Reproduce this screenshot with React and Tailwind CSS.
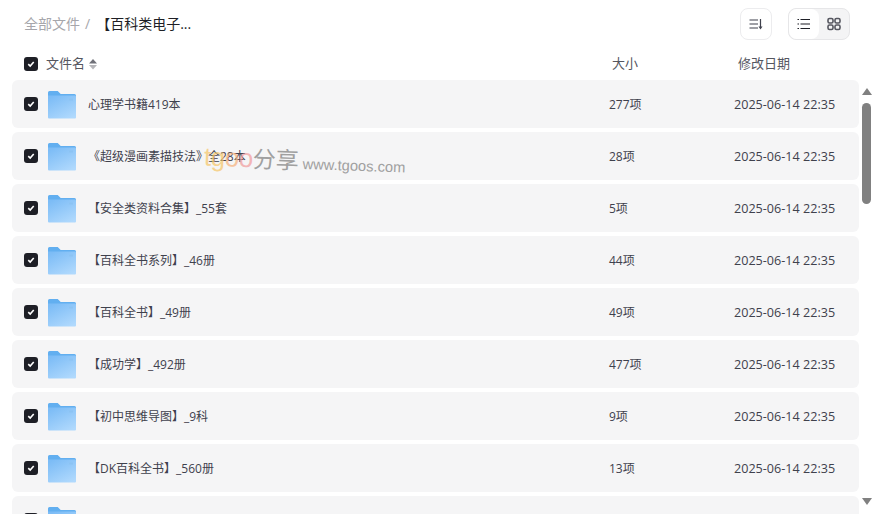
const rows = [
  ["心理学书籍419本", "277项"],
  ["《超级漫画素描技法》全28本", "28项"],
  ["【安全类资料合集】_55套", "5项"],
  ["【百科全书系列】_46册", "44项"],
  ["【百科全书】_49册", "49项"],
  ["【成功学】_492册", "477项"],
  ["【初中思维导图】_9科", "9项"],
  ["【DK百科全书】_560册", "13项"],
  ["", ""],
];

function Check() {
  return (
    <span className="flex h-[14px] w-[14px] shrink-0 items-center justify-center rounded-[3px] bg-[#1e1f26]">
      <svg width="8" height="8" viewBox="0 0 10 10" fill="none">
        <path d="M1.6 5.2 4 7.6 8.4 2.6" stroke="#fff" strokeWidth="2" />
      </svg>
    </span>
  );
}

function Folder() {
  return (
    <svg width="30" height="30" viewBox="0 0 30 30" className="shrink-0">
      <defs>
        <linearGradient id="fg" x1="0.2" y1="0" x2="0.8" y2="1">
          <stop offset="0" stopColor="#7cbcf6" />
          <stop offset="1" stopColor="#b0d9fd" />
        </linearGradient>
      </defs>
      <path d="M1 3.5A1.5 1.5 0 0 1 2.5 2h8.2l3 3H27.5A1.5 1.5 0 0 1 29 6.5V10H1Z" fill="#62aff0" />
      <path d="M1 6.5h27A1 1 0 0 1 29 7.500V28.500A1 1 0 0 1 28 29.500H2A1 1 0 0 1 1 28.500Z" fill="url(#fg)" />
      <rect x="22" y="9.500" width="4" height="2" fill="#8cc3f3" />
    </svg>
  );
}

function Row({ name, count }) {
  return (
    <div className="flex h-12 shrink-0 items-center rounded-md bg-[#f5f5f6] pl-3 text-xs text-[#3f414d]">
      <Check />
      <span className="ml-[9px]"><Folder /></span>
      <span className="ml-[11px] w-[521px] shrink-0 translate-y-[1px] truncate">{name}</span>
      <span className="w-[125px] shrink-0 translate-y-[1px]">{count}</span>
      {name && <span className="translate-y-[1px] whitespace-nowrap text-[12.6px]">2025-06-14 22:35</span>}
    </div>
  );
}

export default function App() {
  return (
    <div className="relative flex h-[514px] w-[874px] flex-col overflow-hidden bg-white font-['Open_Sans','Noto_Sans_CJK_SC',sans-serif] text-[#3f414d]">
      <header className="flex h-[48px] shrink-0 items-center pl-6 pr-6">
        <span className="text-sm text-[#a6a6ab]">全部文件</span>
        <span className="ml-[5px] text-sm text-[#a6a6ab]">/</span>
        <span className="ml-[6px] text-sm text-[#1e1f26]">【百科类电子...</span>
        <div className="ml-auto flex items-center gap-4">
          <button className="flex h-8 w-8 items-center justify-center rounded-lg border border-[#ececee] bg-white">
            <svg width="14" height="14" viewBox="0 0 14 14" fill="none" stroke="#3f414d" strokeWidth="1.200">
              <path d="M0.500 3H9M0.500 7H9M0.500 11H9M11.500 2V10" />
              <path d="M9.500 9.500h4L11.500 12.500Z" fill="#3f414d" stroke="none" />
            </svg>
          </button>
          <div className="flex h-8 w-[62px] rounded-lg border border-[#e6e6e8] bg-[#f4f4f5]">
            <span className="flex w-[30px] items-center justify-center rounded-lg bg-white">
              <svg width="14" height="14" viewBox="0 0 14 14" fill="none" stroke="#1e1f26" strokeWidth="1.200">
                <path d="M3.500 2.500H13M3.500 7H13M3.500 11.500H13M0.500 2.500H2M0.500 7H2M0.500 11.500H2" />
              </svg>
            </span>
            <span className="flex flex-1 items-center justify-center">
              <svg width="14" height="14" viewBox="0 0 14 14" fill="none" stroke="#55565f" strokeWidth="1.600">
                <rect x="1" y="1.500" width="5" height="4.500" rx="1.500" />
                <rect x="8" y="1.500" width="5" height="4.500" rx="1.500" />
                <rect x="1" y="8" width="5" height="4.500" rx="1.500" />
                <rect x="8" y="8" width="5" height="4.500" rx="1.500" />
              </svg>
            </span>
          </div>
        </div>
      </header>

      <div className="flex h-[32px] shrink-0 items-center pl-6 text-[13px] text-[#55565f]">
        <Check />
        <span className="ml-2">文件名</span>
        <svg width="8" height="12" viewBox="0 0 8 12" className="ml-[4px]">
          <path d="M4 1 8 5.500H0Z" fill="#6f7078" />
          <path d="M4 11.500 0 7h8Z" fill="#b5b5b9" />
        </svg>
        <span className="ml-[515px] w-[126px] shrink-0">大小</span>
        <span>修改日期</span>
      </div>

      <div className="flex min-h-0 flex-1">
        <div className="ml-3 flex w-[847px] shrink-0 flex-col gap-1 overflow-hidden">
          {rows.map((r, i) => <Row key={i} name={r[0]} count={r[1]} />)}
        </div>
        <div className="flex w-[15px] flex-col items-center">
          <svg width="10" height="7" viewBox="0 0 10 7" className="mt-[8px]"><path d="M5 0 10 7H0Z" fill="#808080" /></svg>
          <div className="mt-[8px] h-[101px] w-[9px] rounded-full bg-[#808080]" />
          <svg width="10" height="7" viewBox="0 0 10 7" className="mt-auto mb-[9px]"><path d="M5 7 0 0H10Z" fill="#808080" /></svg>
        </div>
      </div>

      <div className="pointer-events-none absolute left-[204px] top-[146px] flex rotate-[2deg] items-baseline whitespace-nowrap font-['Liberation_Sans','Noto_Sans_CJK_SC',sans-serif]">
        <span className="text-[26px] leading-7 tracking-[-0.5px] opacity-70">
          <span className="text-[#f6c667]">t</span>
          <span className="text-[#f6c667]">g</span>
          <span className="text-[#f5b07a]">o</span>
          <span className="text-[#f29b9b]">o</span>
        </span>
        <span className="text-[23px] leading-7 text-[#a0a0a0]">分享</span>
        <span className="ml-[4px] text-[14.7px] leading-7 text-[#a0a0a0]">www.tgoos.com</span>
      </div>
    </div>
  );
}
